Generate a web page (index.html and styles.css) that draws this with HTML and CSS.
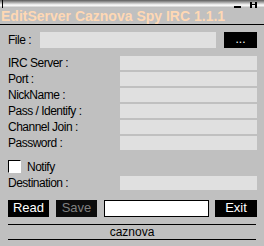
FILE: index.html
```html
<!DOCTYPE html>
<html>
<head>
<meta charset="utf-8">
<link rel="stylesheet" href="styles.css">
</head>
<body>
<div class="win">
  <div class="topbar">
    <span class="tick"></span>
    <span class="spacer"></span>
    <svg class="ctl" width="8" height="8" viewBox="0 0 8 8"><rect x="0" y="6" width="7" height="2" fill="#000"/></svg>
    <svg class="ctl close" width="8" height="8" viewBox="0 0 8 8"><path d="M0 2h2v6H0zM5 2h2v6H5zM2 4h3v1H2z" fill="#000"/></svg>
  </div>
  <div class="title">EditServer Caznova Spy IRC 1.1.1</div>
  <div class="content">
    <div class="filerow">
      <span class="flabel">File :</span>
      <span class="field ffield"></span>
      <span class="btn dots">...</span>
    </div>
    <div class="rows">
      <div class="row"><span class="label">IRC Server :</span><span class="field"></span></div>
      <div class="row"><span class="label">Port :</span><span class="field"></span></div>
      <div class="row"><span class="label">NickName :</span><span class="field"></span></div>
      <div class="row"><span class="label">Pass / Identify :</span><span class="field"></span></div>
      <div class="row"><span class="label">Channel Join :</span><span class="field"></span></div>
      <div class="row"><span class="label">Password :</span><span class="field"></span></div>
    </div>
    <div class="notify"><span class="check"></span><span>Notify</span></div>
    <div class="row dest"><span class="label">Destination :</span><span class="field"></span></div>
    <div class="buttons">
      <span class="btn read">Read</span>
      <span class="btn save">Save</span>
      <span class="whitebox"></span>
      <span class="btn exit">Exit</span>
    </div>
    <div class="status">caznova</div>
  </div>
</div>
</body>
</html>
```
FILE: styles.css
```css
html, body {
  margin: 0;
  padding: 0;
  background: #c0c0c0;
}
body {
  width: 264px;
  height: 246px;
  overflow: hidden;
  font-family: "Liberation Sans", Arial, sans-serif;
  font-size: 12px;
  letter-spacing: -0.5px;
  color: #000;
}
.topbar {
  height: 8px;
  display: flex;
  align-items: stretch;
  background: linear-gradient(#5a5a5a, #9a9a9a 25%, #dcdcdc 50%, #ffffff 65%, #b0b0b0 100%);
}
.tick {
  width: 1px;
  margin-left: 2px;
  background: #000;
}
.spacer { flex: 1; }
.ctl {
  display: block;
  margin-right: 8px;
}
.ctl.close {
  margin-right: 6px;
}
.title {
  height: 16px;
  line-height: 16px;
  color: #ffd8b4;
  font-weight: bold;
  font-size: 14px;
  letter-spacing: 0;
  padding-left: 1px;
  border-bottom: 1px solid #000;
  white-space: nowrap;
}
.content {
  padding: 7px 7px 0 8px;
  display: flex;
  flex-direction: column;
}
.field {
  background: #e0e0e0;
}
.filerow {
  display: flex;
  height: 16px;
  align-items: stretch;
}
.flabel {
  width: 32px;
  line-height: 16px;
}
.ffield {
  width: 176px;
}
.btn {
  background: #000;
  color: #fff;
  text-align: center;
  letter-spacing: 0;
}
.dots {
  margin-left: 8px;
  width: 33px;
  line-height: 14px;
}
.rows {
  margin-top: 8px;
  display: flex;
  flex-direction: column;
  gap: 2px;
}
.row {
  display: flex;
  height: 14px;
}
.label {
  width: 112px;
  line-height: 14px;
  white-space: nowrap;
}
.row .field {
  width: 137px;
}
.notify {
  margin-top: 10px;
  height: 13px;
  display: flex;
  align-items: center;
  gap: 6px;
}
.check {
  width: 11px;
  height: 11px;
  background: #fff;
  border-top: 1px solid #000;
  border-left: 1px solid #000;
  border-right: 1px solid #fff;
  border-bottom: 1px solid #fff;
  box-sizing: content-box;
}
.dest {
  margin-top: 3px;
}
.buttons {
  margin-top: 10px;
  height: 17px;
  display: flex;
}
.buttons .btn {
  line-height: 16px;
  font-size: 13px;
}
.read { width: 41px; }
.save { width: 41px; margin-left: 7px; color: #808080; background: #0c0c0c; }
.whitebox {
  width: 105px;
  margin-left: 7px;
  background: #fff;
  border: 1px solid #000;
  box-sizing: border-box;
}
.exit { width: 42px; margin-left: 6px; }
.status {
  margin-top: 7px;
  width: 248px;
  height: 14px;
  border-top: 1px solid #000;
  border-bottom: 1px solid #000;
  text-align: center;
  line-height: 14px;
  letter-spacing: 0;
}
```
